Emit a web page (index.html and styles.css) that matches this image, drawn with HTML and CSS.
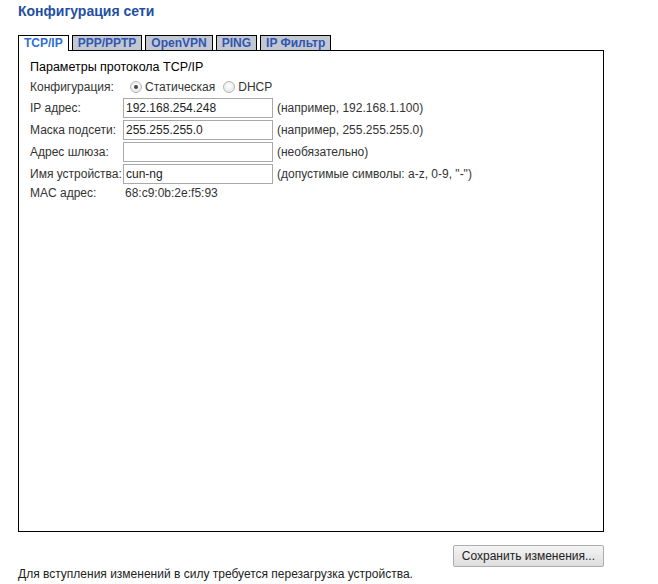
FILE: index.html
```html
<!DOCTYPE html>
<html lang="ru">
<head>
<meta charset="utf-8">
<title>Конфигурация сети</title>
<link rel="stylesheet" href="styles.css">
</head>
<body>
<div class="page">
  <h1 class="title">Конфигурация сети</h1>
  <div class="tabs">
    <span class="tab active">TCP/IP</span>
    <span class="tab">PPP/PPTP</span>
    <span class="tab">OpenVPN</span>
    <span class="tab">PING</span>
    <span class="tab">IP Фильтр</span>
  </div>
  <div class="panel">
    <div class="section">Параметры протокола TCP/IP</div>
    <div class="form">
      <div class="row config">
        <span class="label">Конфигурация:</span>
        <span class="radios">
          <span class="radio checked"></span><span class="rlabel">Статическая</span>
          <span class="radio"></span><span class="rlabel">DHCP</span>
        </span>
      </div>
      <div class="row">
        <span class="label">IP адрес:</span>
        <span class="input">192.168.254.248</span>
        <span class="hint">(например, 192.168.1.100)</span>
      </div>
      <div class="row">
        <span class="label">Маска подсети:</span>
        <span class="input">255.255.255.0</span>
        <span class="hint">(например, 255.255.255.0)</span>
      </div>
      <div class="row">
        <span class="label">Адрес шлюза:</span>
        <span class="input"></span>
        <span class="hint">(необязательно)</span>
      </div>
      <div class="row">
        <span class="label">Имя устройства:</span>
        <span class="input">cun-ng</span>
        <span class="hint">(допустимые символы: a-z, 0-9, "-")</span>
      </div>
      <div class="row mac">
        <span class="label">MAC адрес:</span>
        <span class="value">68:c9:0b:2e:f5:93</span>
      </div>
    </div>
  </div>
  <div class="actions">
    <button class="btn">Сохранить изменения...</button>
  </div>
  <div class="note">Для вступления изменений в силу требуется перезагрузка устройства.</div>
</div>
</body>
</html>
```
FILE: styles.css
```css
html, body {
  margin: 0;
  padding: 0;
  background: #ffffff;
}
body {
  font-family: "Liberation Sans", Arial, sans-serif;
  font-size: 12px;
  color: #222222;
}
.page {
  padding: 4px 0 0 18px;
  width: 586px;
}
.title {
  margin: 0;
  font-size: 14px;
  font-weight: bold;
  color: #1f4fa3;
  line-height: 15px;
}
.tabs {
  display: flex;
  gap: 3px;
  margin-top: 16px;
  height: 15px;
  align-items: flex-end;
}
.tab {
  display: block;
  border: 1px solid #000;
  border-bottom: none;
  background: #c3c7d2;
  color: #2f56b0;
  font-weight: bold;
  font-size: 12px;
  line-height: 14px;
  padding: 0 5px;
  height: 14px;
}
.tab.active {
  background: #ffffff;
  color: #2f6fd0;
  height: 15px;
  position: relative;
  top: 1px;
}
.panel {
  border: 1px solid #000;
  height: 471px;
  padding: 9px 0 0 11px;
  box-sizing: content-box;
  width: 573px;
}
.section {
  font-size: 12.5px;
  color: #000;
  line-height: 14px;
  margin-bottom: 3px;
}
.form {
  display: flex;
  flex-direction: column;
  gap: 2px;
}
.row {
  display: flex;
  align-items: center;
  height: 20px;
}
.row.config {
  height: 19px;
}
.row.mac {
  height: 14px;
}
.label {
  width: 93px;
  flex: none;
  color: #333;
}
.radios {
  display: flex;
  align-items: center;
  margin-left: 7px;
}
.radio {
  width: 12px;
  height: 12px;
  border-radius: 50%;
  border: 1px solid #b4b4b4;
  background: radial-gradient(circle at 50% 40%, #ffffff, #e2e2e2);
  box-sizing: border-box;
  position: relative;
  margin-right: 3px;
}
.radio.checked::after {
  content: "";
  position: absolute;
  left: 3px;
  top: 3px;
  width: 4px;
  height: 4px;
  border-radius: 50%;
  background: #444;
}
.rlabel {
  margin-right: 8px;
  color: #333;
}
.input {
  width: 144px;
  height: 18px;
  border: 1px solid #a9a9a9;
  padding: 0 2px;
  line-height: 18px;
  font-size: 12px;
  color: #222;
  flex: none;
  box-sizing: content-box;
}
.hint {
  margin-left: 4px;
  color: #333;
}
.value {
  margin-left: 2px;
  color: #333;
}
.actions {
  display: flex;
  justify-content: flex-end;
  margin-top: 13px;
}
.btn {
  font-family: "Liberation Sans", Arial, sans-serif;
  font-size: 12px;
  color: #222;
  height: 22px;
  padding: 0 8px;
  border: 1px solid #adadad;
  border-radius: 2px;
  background: linear-gradient(#f4f4f4, #dedede);
}
.note {
  line-height: 14px;
  color: #222;
}
```
